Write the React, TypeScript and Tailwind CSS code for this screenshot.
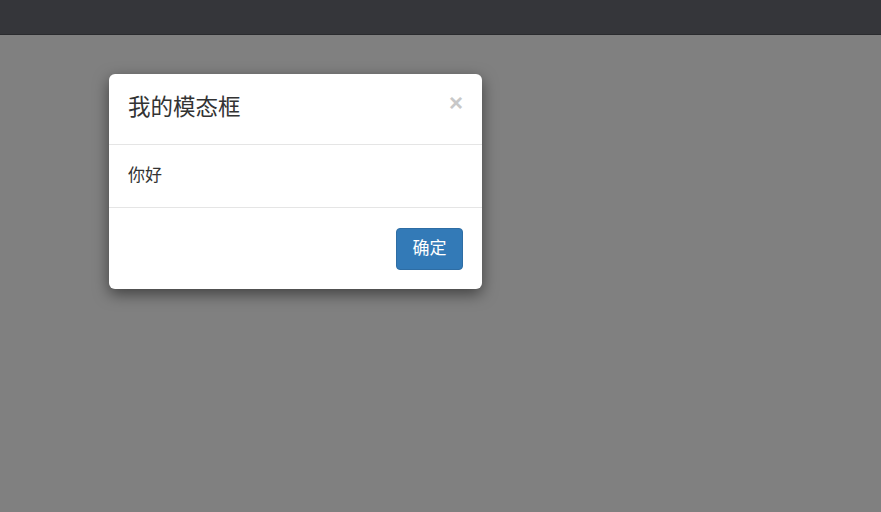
import React from "react";

export default function App() {
  return (
    <div
      className="w-[881px] h-[512px] bg-[#808080] flex flex-col overflow-hidden"
      style={{ fontFamily: '"Liberation Sans", "Noto Sans CJK SC", sans-serif' }}
    >
      <div className="h-[35px] shrink-0 bg-[#35363a] border-b border-[#2a2b2e]" />
      <div className="pl-[109px] pt-[39px]">
        <div className="w-[373px] bg-white rounded-[6px] shadow-[0_5px_15px_rgba(0,0,0,0.5)] text-[#333]">
          <div className="h-[71px] flex items-center justify-between px-[19px] border-b border-[#e5e5e5]">
            <h4 className="text-[22.5px] leading-none font-normal -mt-[2px]">我的模态框</h4>
            <span className="text-[24px] font-bold leading-none text-[#c8c8c8] -mt-[13px]">×</span>
          </div>
          <div className="h-[62px] flex items-center px-[19px] text-[17px]">你好</div>
          <div className="h-[82px] flex items-center justify-end px-[19px] border-t border-[#e5e5e5]">
            <button className="w-[67px] h-[42px] bg-[#337ab7] border border-[#2e6da4] rounded-[4px] text-white text-[17px]">
              确定
            </button>
          </div>
        </div>
      </div>
    </div>
  );
}
